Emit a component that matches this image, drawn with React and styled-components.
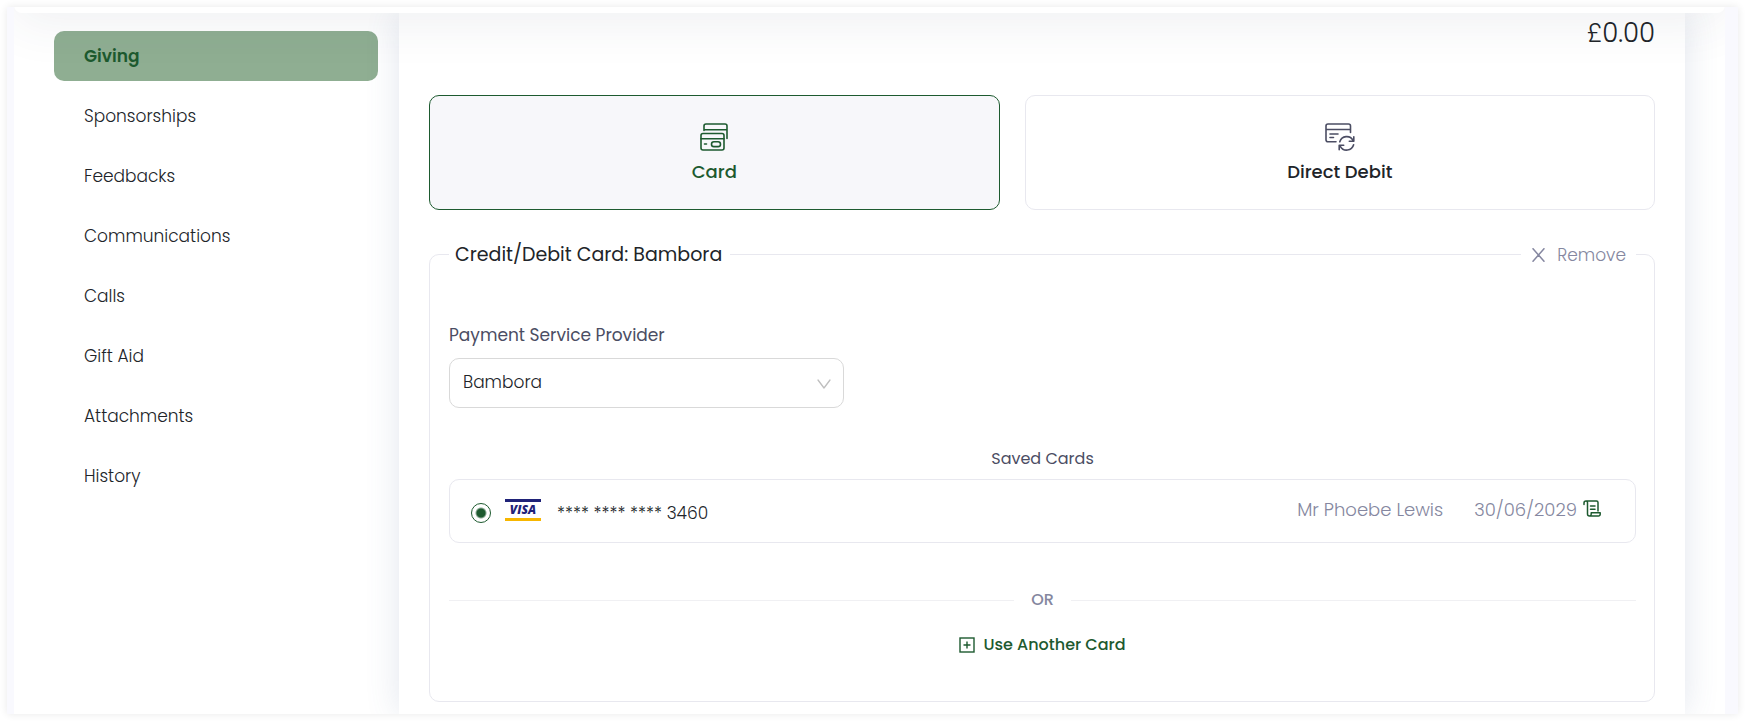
import React, { useState } from "react";
import styled, { createGlobalStyle, css } from "styled-components";

const green = "#1d5a2f";
const muted = "#8587a0";
const slate = "#4b4d63";
const ink = "#212429";
const line = "#e8e8ef";

const GlobalStyle = createGlobalStyle`
  *, *::before, *::after { box-sizing: border-box; }
  body {
    margin: 0;
    background: #fff;
    color: ${ink};
    font-family: Poppins, Inter, "Open Sans", sans-serif;
    font-size: 17px;
    font-weight: 300;
    line-height: 24px;
  }
  button, select, input { font: inherit; color: inherit; }
`;

const Page = styled.div`
  display: flex;
  min-height: 100vh;
  padding: 7px 7px 8px;
`;

const Frame = styled.div`
  flex: 1;
  display: flex;
  padding: 0 13px 0 7px;
  background: #f9f9fe;
  box-shadow: 0 0 8px rgba(0, 0, 0, 0.09);
`;

const Screen = styled.div`
  flex: 1;
  min-width: 0;
  display: flex;
  flex-direction: column;
  overflow: hidden;
  background: #fff;
`;

const TopBar = styled.header`
  position: relative;
  z-index: 1;
  height: 80px;
  margin-top: -74px;
  flex: none;
  border-radius: 8px;
  background: #fff;
  box-shadow: 0 10px 50px rgba(50, 70, 90, 0.08);
  pointer-events: none;
`;

const Body = styled.div`
  flex: 1;
  display: flex;
  padding-right: 40px;
`;

const Sidebar = styled.nav`
  width: 385px;
  flex: none;
  padding: 18px 21px 18px 40px;
`;

const Menu = styled.ul`
  display: flex;
  flex-direction: column;
  gap: 10px;
  margin: 0;
  padding: 0;
  list-style: none;
`;

const MenuLink = styled.a`
  display: flex;
  align-items: center;
  height: 50px;
  padding: 0 30px;
  border-radius: 10px;
  color: ${ink};
  text-decoration: none;
  ${(p) =>
    p.$active &&
    css`
      background: #8fae92;
      color: ${green};
      font-weight: 600;
    `}
`;

const Panel = styled.main`
  flex: 1;
  min-width: 0;
  padding: 2px 30px 12px;
  background: #fff;
  box-shadow: 0 0 32px rgba(76, 100, 150, 0.16);
`;

const Amount = styled.div`
  margin-bottom: 44px;
  font-size: 26px;
  line-height: 36px;
  text-align: right;
`;

const Methods = styled.div`
  display: flex;
  gap: 25px;
  margin-bottom: 44px;
`;

const Method = styled.button`
  flex: 1 1 auto;
  display: flex;
  flex-direction: column;
  align-items: center;
  gap: 9px;
  height: 115px;
  padding: 27px 0 0;
  border: 1px solid ${(p) => (p.$active ? green : line)};
  border-radius: 10px;
  background: ${(p) => (p.$active ? "#f7f7fa" : "#fff")};
  color: ${(p) => (p.$active ? green : ink)};
  font-size: 18px;
  font-weight: 500;
  svg { color: ${(p) => (p.$active ? green : slate)}; }
`;

const Group = styled.section`
  padding: 0 18px 44px 19px;
  border: 1px solid ${line};
  border-radius: 10px;
`;

const GroupHeader = styled.div`
  display: flex;
  justify-content: space-between;
  margin: -12px 0 56px;
`;

const GroupTitle = styled.h2`
  margin: 0;
  padding: 0 8px 0 6px;
  background: #fff;
  font-size: 19px;
  font-weight: 400;
  line-height: 24px;
`;

const RemoveButton = styled.button`
  display: flex;
  align-items: center;
  gap: 12px;
  padding: 0 10px 0 11px;
  border: 0;
  background: #fff;
  color: ${muted};
`;

const FieldLabel = styled.label`
  display: block;
  margin-bottom: 11px;
  color: ${slate};
  font-weight: 400;
`;

const SelectBox = styled.div`
  position: relative;
  max-width: 395px;
  svg {
    position: absolute;
    right: 13px;
    top: 21px;
    color: #bfbfbf;
    pointer-events: none;
  }
`;

const Select = styled.select`
  display: block;
  width: 100%;
  height: 50px;
  padding: 0 36px 2px 13px;
  border: 1px solid #d9d9d9;
  border-radius: 10px;
  background: #fff;
  appearance: none;
`;

const Caption = styled.h3`
  margin: 39px 0 8px;
  color: ${slate};
  font-size: 16px;
  font-weight: 400;
  line-height: 24px;
  text-align: center;
`;

const CardRow = styled.label`
  display: flex;
  align-items: center;
  height: 64px;
  padding: 0 34px 0 21px;
  border: 1px solid ${line};
  border-radius: 10px;
`;

const Radio = styled.input`
  appearance: none;
  width: 20px;
  height: 20px;
  margin: 4px 14px 0 0;
  border: 1px solid ${green};
  border-radius: 50%;
  background: #fff;
  &:checked { background: radial-gradient(circle, ${green} 4px, #fff 6px); }
`;

const Visa = styled.span`
  width: 36px;
  height: 22px;
  margin: 0 16px 2px 0;
  border-top: 3px solid #1f2278;
  border-bottom: 3px solid #f7b600;
  color: #1f2278;
  font-family: "Open Sans", sans-serif;
  font-size: 12px;
  font-style: italic;
  font-weight: 800;
  line-height: 16px;
  text-align: center;
`;

const CardNumber = styled.span`
  flex: 1;
  padding-top: 4px;
`;

const Holder = styled.span`
  padding-bottom: 2px;
  margin-right: 31px;
  color: ${muted};
  font-size: 18px;
`;

const Expiry = styled.span`
  display: flex;
  gap: 6px;
  padding-bottom: 2px;
  color: ${muted};
  font-size: 18px;
  svg { margin-top: 2px; }
`;

const Divider = styled.div`
  display: flex;
  align-items: center;
  gap: 17px;
  margin: 45px 0 21px;
  color: ${muted};
  font-size: 16px;
  font-weight: 500;
  &::before, &::after {
    content: "";
    flex: 1;
    height: 1px;
    background: #f0f0f3;
  }
`;

const AddButton = styled.button`
  display: flex;
  align-items: center;
  gap: 8px;
  margin: 0 auto;
  padding: 0;
  border: 0;
  background: none;
  color: ${green};
  font-size: 16px;
  font-weight: 500;
`;

const stroke = { fill: "none", stroke: "currentColor", strokeLinecap: "round", strokeLinejoin: "round" };

const CardsIcon = () => (
  <svg width="28" height="28" viewBox="0 0 28 28" {...stroke} strokeWidth="1.6" aria-hidden="true">
    <path d="M4 7.5V3a2 2 0 0 1 2-2h19a2 2 0 0 1 2 2v12.500M4 6.800h23" />
    <rect x="1" y="10.500" width="23" height="16.500" rx="2" />
    <path d="M1 15.800h23M4.500 21h2" />
    <rect x="11.500" y="18.800" width="9" height="4.800" rx="2.400" />
  </svg>
);

const DebitIcon = () => (
  <svg width="30" height="28" viewBox="0 0 30 28" {...stroke} strokeWidth="1.6" aria-hidden="true">
    <path d="M11 18.800H3a2 2 0 0 1-2-2V3a2 2 0 0 1 2-2h20.500a2 2 0 0 1 2 2v6.500M1 6.500h24.500M5 11h8M5 14.500h3.500" />
    <path d="M14.800 18.800a7.200 7.200 0 0 1 13.300-1.300M28.800 13.800v4.500h-4.500M28.600 21.800a7.200 7.200 0 0 1-13.300 1.500M14.200 26.800v-4.500h4.500" />
  </svg>
);

const CloseIcon = () => (
  <svg width="13" height="14" viewBox="0 0 13 14" {...stroke} strokeWidth="1.5" aria-hidden="true">
    <path d="M1 .7 12 13.300M12 .7 1 13.300" />
  </svg>
);

const ChevronIcon = () => (
  <svg width="14" height="10" viewBox="0 0 14 10" {...stroke} strokeWidth="1.3" aria-hidden="true">
    <path d="M1 1l6 8 6-8" />
  </svg>
);

const ScrollIcon = () => (
  <svg width="18" height="17" viewBox="0 0 18 17" fill="none" stroke={green} strokeWidth="1.500" strokeLinecap="round" strokeLinejoin="round" aria-hidden="true">
    <path d="M1 4.500V3a2 2 0 0 1 2-2h10.500a1.500 1.500 0 0 1 1.500 1.500V11M3 1a1.500 1.500 0 0 1 1.500 1.500V14A2 2 0 0 0 6.500 16h9a1.700 1.700 0 0 0 1.700-1.700v-1.500H8.200v1.500A1.700 1.700 0 0 1 6.500 16M7.500 6h4.500M7.500 9.300h4.500" />
  </svg>
);

const PlusSquareIcon = () => (
  <svg width="16" height="16" viewBox="0 0 16 16" fill="none" stroke="currentColor" strokeWidth="1.400" aria-hidden="true">
    <rect x="1" y="1" width="14" height="14" />
    <path d="M8 4.500v7M4.500 8h7" />
  </svg>
);

const sections = ["Giving", "Sponsorships", "Feedbacks", "Communications", "Calls", "Gift Aid", "Attachments", "History"];

const methods = [
  { name: "Card", Icon: CardsIcon },
  { name: "Direct Debit", Icon: DebitIcon },
];

export default function App() {
  const [section, setSection] = useState("Giving");
  const [method, setMethod] = useState("Card");

  return (
    <Page>
      <GlobalStyle />
      <Frame>
        <Screen>
          <TopBar />
          <Body>
            <Sidebar>
              <Menu>
                {sections.map((name) => (
                  <li key={name}>
                    <MenuLink href="#" $active={name === section} onClick={() => setSection(name)}>
                      {name}
                    </MenuLink>
                  </li>
                ))}
              </Menu>
            </Sidebar>
            <Panel>
              <Amount>£0.00</Amount>
              <Methods>
                {methods.map(({ name, Icon }) => (
                  <Method key={name} type="button" $active={name === method} onClick={() => setMethod(name)}>
                    <Icon />
                    {name}
                  </Method>
                ))}
              </Methods>
              <Group>
                <GroupHeader>
                  <GroupTitle>Credit/Debit Card: Bambora</GroupTitle>
                  <RemoveButton type="button">
                    <CloseIcon />
                    Remove
                  </RemoveButton>
                </GroupHeader>
                <FieldLabel htmlFor="provider">Payment Service Provider</FieldLabel>
                <SelectBox>
                  <Select id="provider" defaultValue="Bambora">
                    <option>Bambora</option>
                  </Select>
                  <ChevronIcon />
                </SelectBox>
                <Caption>Saved Cards</Caption>
                <CardRow>
                  <Radio type="radio" name="saved-card" defaultChecked />
                  <Visa>VISA</Visa>
                  <CardNumber>**** **** **** 3460</CardNumber>
                  <Holder>Mr Phoebe Lewis</Holder>
                  <Expiry>
                    30/06/2029
                    <ScrollIcon />
                  </Expiry>
                </CardRow>
                <Divider>OR</Divider>
                <AddButton type="button">
                  <PlusSquareIcon />
                  Use Another Card
                </AddButton>
              </Group>
            </Panel>
          </Body>
        </Screen>
      </Frame>
    </Page>
  );
}
